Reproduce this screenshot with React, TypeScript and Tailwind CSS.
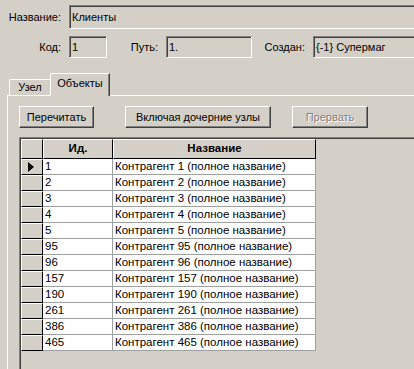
import React from 'react';

const rows: [string, string][] = [
  ['1', 'Контрагент 1 (полное название)'],
  ['2', 'Контрагент 2 (полное название)'],
  ['3', 'Контрагент 3 (полное название)'],
  ['4', 'Контрагент 4 (полное название)'],
  ['5', 'Контрагент 5 (полное название)'],
  ['95', 'Контрагент 95 (полное название)'],
  ['96', 'Контрагент 96 (полное название)'],
  ['157', 'Контрагент 157 (полное название)'],
  ['190', 'Контрагент 190 (полное название)'],
  ['261', 'Контрагент 261 (полное название)'],
  ['386', 'Контрагент 386 (полное название)'],
  ['465', 'Контрагент 465 (полное название)'],
];

const edit =
  'flex items-center pl-[2px] border border-t-[#808080] border-l-[#808080] border-r-white border-b-white shadow-[inset_1px_1px_0_#404040] bg-[#d4d0c8] whitespace-nowrap shrink-0';

const button =
  'flex items-center justify-center h-[22px] border border-t-white border-l-white border-r-[#404040] border-b-[#404040] shadow-[inset_-1px_-1px_0_#808080] bg-[#d4d0c8] shrink-0';

const headCell =
  'flex items-center justify-center h-[20px] border border-t-white border-l-white border-r-black border-b-black font-bold shrink-0';

const App: React.FC = () => {
  return (
    <div className="w-[414px] h-[369px] overflow-hidden bg-[#d4d0c8] text-[11px] text-black font-['Liberation_Sans',Arial,sans-serif] leading-none">
      {/* Header fields */}
      <div className="flex items-center pt-[5px]">
        <div className="w-[61px] text-right shrink-0">Название:</div>
        <div className={`${edit} ml-[8px] w-[360px] h-[24px]`}>Клиенты</div>
      </div>

      <div className="flex items-center mt-[7px]">
        <div className="w-[61px] text-right shrink-0">Код:</div>
        <div className={`${edit} ml-[8px] w-[38px] h-[22px]`}>1</div>
        <div className="w-[51px] text-right shrink-0">Путь:</div>
        <div className={`${edit} ml-[8px] w-[86px] h-[22px]`}>1.</div>
        <div className="w-[53px] text-right shrink-0">Создан:</div>
        <div className={`${edit} ml-[8px] w-[140px] h-[22px]`}>{'{-1} Супермаг'}</div>
      </div>

      {/* Tabs */}
      <div className="flex items-end ml-[9px] mt-[15px] h-[22px]">
        <div className="flex items-center justify-center w-[41px] h-[16px] border-l border-t border-white rounded-tl-[2px]">
          Узел
        </div>
        <div className="relative z-10 flex items-center justify-center w-[60px] h-[23px] -mb-[1px] pb-[3px] bg-[#d4d0c8] border-l border-t border-white border-r border-r-[#404040] shadow-[inset_-1px_0_0_#808080] rounded-tl-[2px]">
          Объекты
        </div>
      </div>

      {/* Tab panel */}
      <div className="ml-[7px] w-[420px] h-[300px] border-l border-t border-white pl-[11px] pt-[10px]">
        <div className="flex">
          <div className={`${button} w-[75px]`}>Перечитать</div>
          <div className={`${button} w-[146px] ml-[31px]`}>Включая дочерние узлы</div>
          <div className={`${button} w-[76px] ml-[21px] text-[#808080] [text-shadow:1px_1px_0_#ffffff]`}>Прервать</div>
        </div>

        {/* Grid */}
        <div className="mt-[9px] h-[260px] border-l border-t border-[#808080]">
          <div className="h-full border-l border-t border-[#404040] bg-[#d4d0c8] text-[11.5px]">
            <div className="flex">
              <div className={`${headCell} w-[22px]`} />
              <div className={`${headCell} w-[70px]`}>Ид.</div>
              <div className={`${headCell} w-[203px]`}>Название</div>
            </div>
            {rows.map(([id, name], i) => (
              <div key={id} className="flex h-[16px]">
                <div className="flex items-center w-[22px] border border-t-white border-l-white border-r-black border-b-black bg-[#d4d0c8]">
                  {i === 0 && (
                    <svg width="6" height="10" viewBox="0 0 6 10" className="ml-[6px]">
                      <path d="M0 0 L6 5 L0 10 Z" fill="#000" />
                    </svg>
                  )}
                </div>
                <div className="flex items-center w-[70px] pl-[2px] bg-white border-r border-b border-[#a0a0a0]">{id}</div>
                <div className="flex items-center w-[203px] pl-[2px] bg-white border-r border-b border-[#a0a0a0] whitespace-nowrap">{name}</div>
              </div>
            ))}
          </div>
        </div>
      </div>
    </div>
  );
};

export default App;
